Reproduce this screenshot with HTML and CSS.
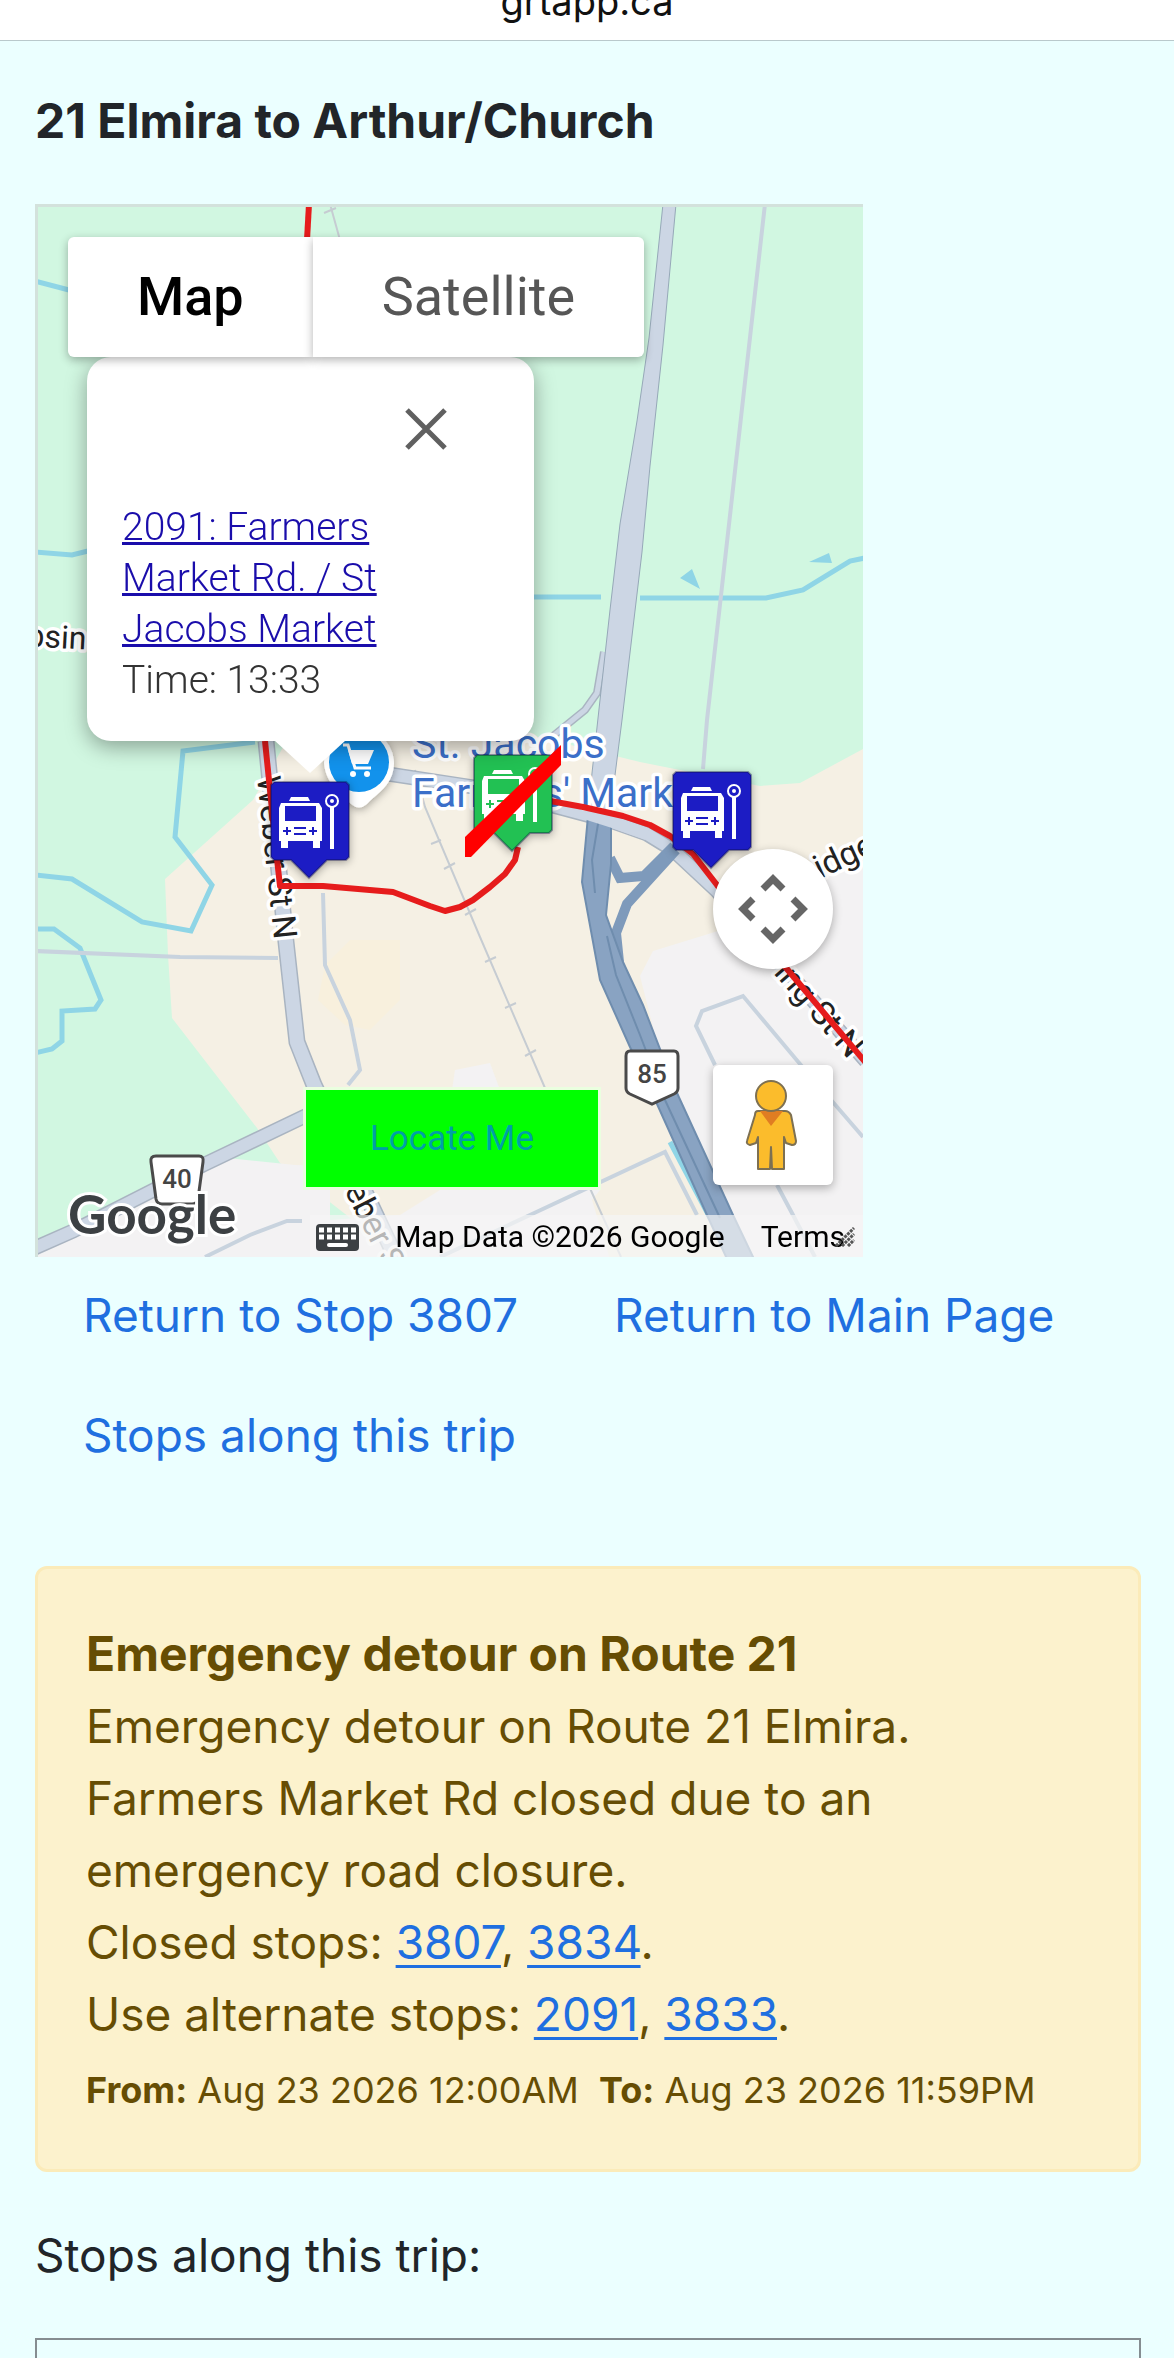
FILE: index.html
```html
<!DOCTYPE html>
<html lang="en">
  <head>
    <meta charset="utf-8">
    <meta name="viewport" content="width=device-width, initial-scale=1">
    <title>21 Elmira to Arthur/Church</title>
    <link rel="stylesheet" href="styles.css">
  </head>
  <body>
  <header class="addressbar">grtapp.ca</header>
  <main class="page">
    <h1 class="title">21 Elmira to Arthur/Church</h1>

    <div class="map">
      <svg class="tiles" viewBox="38 207 825 1050" preserveAspectRatio="xMidYMid slice">
        <defs>
          <g id="bus">
            <path class="pin" d="M3 0H75L78 3V75L75 78H56L38 96L20 78H3L0 75V3Z"/>
            <g fill="#fff">
              <path d="M20 15H37L39 19H18Z"/>
              <path d="M10 21H48L51 26V59H49V66H42V59H17V66H10V59H8V26Z"/>
              <rect x="59" y="24" width="4" height="43"/>
            </g>
            <rect x="14" y="24" width="31" height="15" fill="currentColor"/>
            <circle cx="61" cy="19" r="6" fill="none" stroke="#fff" stroke-width="2"/>
            <circle cx="61" cy="19" r="2" fill="#fff"/>
            <path class="lamps" d="M12 49H20M16 45V53M38 49H46M42 45V53M23 46H35M23 52H35"/>
          </g>
          <filter id="soft" x="-30%" y="-30%" width="160%" height="160%">
            <feDropShadow dx="0" dy="2" stdDeviation="4" flood-opacity=".35"/>
          </filter>
        </defs>

        <!-- land -->
        <rect x="35" y="204" width="830" height="1055" fill="#d1f7e1"/>
        <path fill="#f5f0e4" d="M165 879L253 800L290 735H530L640 762L760 786L800 783L863 749V1257H400L280 1163L257 1128L172 1018L168 955Z"/>
        <path fill="#f8f0dd" d="M325 965L350 940H400V1000L370 1030L345 1025L318 1000Z"/>
        <path fill="#f3f2f3" d="M35 1259V1246L190 1175L227 1158L295 1165L330 1166V1220L400 1215L440 1190H600L592 1200L610 1259Z"/>
        <path fill="#f3f2f3" d="M653 951L718 931L800 875L863 845V1259H753L733 1215L677 1093L658 1049L653 1027L640 976Z"/>
        <path fill="#f3f2f3" d="M455 1070L490 1063L500 1090H452Z"/>

        <!-- water -->
        <g class="water">
          <path d="M35 875L72 879L142 922L191 931L212 885L175 837L183 751L255 742"/>
          <path d="M35 929H54L80 948L101 1000L95 1009L62 1011V1041L52 1049L35 1053"/>
          <path d="M35 281L69 290M35 552L72 555L88 551"/>
          <path d="M533 597H601M640 598H766L803 590L850 561L865 558"/>
          <path d="M670 1142L710 1218"/>
        </g>
        <path fill="#8fd5e6" d="M680 578L692 569L700 589ZM809 562L829 553L832 563Z"/>

        <!-- local roads and railway -->
        <g class="lane">
          <path d="M765 204L707 720L703 769"/>
          <path d="M35 951L180 957L278 958"/>
          <path d="M323 893L325 965L350 1020L360 1070L348 1085"/>
          <path d="M863 1137L800 1064L743 996L702 1011L696 1026L715 1065M777 1185L793 1215L815 1257"/>
          <path d="M440 1257L530 1215L665 1152L697 1215"/>
          <path d="M205 1257L250 1235L287 1221H302"/>
        </g>
        <path class="rail" d="M330 204L340 240M415 770L425 807L480 937L545 1088L593 1195L621 1257M324 213L336 208M431 844L441 840M444 869L455 863M465 915L476 909M485 962L496 957M505 1008L516 1003M525 1056L536 1050"/>

        <!-- main roads -->
        <g class="casing">
          <path d="M266 741L286 942L297 1042L314 1085L345 1150L397 1260" stroke-width="17"/>
          <path d="M30 1250L73 1231L203 1165L320 1109" stroke-width="15"/>
          <path d="M375 772L474 787L553 806L613 822L647 834L673 850L717 891L866 1061" stroke-width="15"/>
          <path d="M604 652L597 693L585 710L553 736" stroke-width="8"/>
        </g>
        <g class="road">
          <path d="M266 741L286 942L297 1042L314 1085L345 1150L397 1260" stroke-width="14"/>
          <path d="M30 1250L73 1231L203 1165L320 1109" stroke-width="12"/>
          <path d="M375 772L474 787L553 806L613 822L647 834L673 850L717 891L866 1061" stroke-width="12"/>
          <path d="M604 652L597 693L585 710L553 736" stroke-width="5"/>
        </g>
        <path fill="#ccd6e4" stroke="#96a8b8" stroke-width="1" d="M663 204L649 338L637 421L620 524L610 610L600 700L592 773L588 816H611L613 791L622 720L642 552L650 466L663 345L676 204Z"/>
        <g class="ramp">
          <path d="M610 858L620 878L644 876L674 846"/>
          <path d="M676 850L627 904L616 933L619 962"/>
        </g>
        <path fill="#89a3c2" stroke="#6f8dae" stroke-width="2" d="M588 816L582 882L600 980L630 1047L657 1104L707 1215L727 1259H754L733 1215L677 1093L643 1005L623 962L606 915L611 864V816Z"/>
        <path fill="none" stroke="#6f8dae" stroke-width="2" d="M599 818L592 860L595 893M607 936L616 975L640 1035L665 1100L720 1218"/>
        <path class="road" d="M575 810L613 822L647 834" stroke-width="12"/>

        <!-- street names -->
        <g class="street">
          <text x="26" y="647" font-size="32" transform="rotate(3 38 647)">bsin</text>
          <text font-size="33" transform="translate(257 777) rotate(84)">Weber St N</text>
          <text font-size="33" transform="translate(344 1190) rotate(63)">eber St</text>
          <text font-size="33" transform="translate(820 879) rotate(-25)">idge</text>
          <text font-size="33" transform="translate(773 973) rotate(49)">ing St N</text>
        </g>

        <!-- shopping place -->
        <g filter="url(#soft)">
          <path fill="#fff" d="M324 763A35 35 0 1 1 392 775C387 789 374 796 367 804Q359 811 351 804C342 795 326 785 324 763Z"/>
        </g>
        <circle cx="359" cy="762" r="30" fill="#1292ec"/>
        <path fill="#fff" d="M348 750H374L368 764H352Z"/>
        <path fill="none" stroke="#fff" stroke-width="3" d="M343 745H348L355 768H371"/>
        <circle cx="353" cy="774" r="3" fill="#fff"/><circle cx="367" cy="774" r="3" fill="#fff"/>
        <g class="place">
          <text x="412" y="758">St. Jacobs</text>
          <text x="412" y="807">Farmers' Mark</text>
        </g>

        <!-- route line -->
        <g class="route">
          <path d="M309 204L307 240"/>
          <path d="M265 741L277 859L280 886H323L393 892L430 906L445 911L460 907L473 900L490 887L505 874L515 860L518 847"/>
          <path d="M545 800L583 807L623 816L650 825L670 836L693 854L717 885L787 969L866 1063"/>
        </g>

        <path class="shield" d="M156 1156H199Q204 1156 203 1162L198 1199Q197 1204 192 1204H162Q157 1204 156 1199L151 1162Q150 1156 156 1156Z"/>
        <text class="shieldno" x="177" y="1188">40</text>
        <path class="shield" d="M630 1051H674Q678 1051 678 1056V1088Q678 1092 674 1094L652 1104L630 1094Q626 1092 626 1088V1056Q626 1051 630 1051Z"/>
        <text class="shieldno" x="652" y="1083">85</text>

        <!-- stops -->
        <g filter="url(#soft)">
          <use href="#bus" x="271" y="782" class="open"/>
          <use href="#bus" x="673" y="772" class="open"/>
          <use href="#bus" x="474" y="755" class="closed"/>
        </g>
        <path fill="#f00" d="M465 837L561 745V765L471 857H465Z"/>

        <text class="google" x="68" y="1234">Google</text>
      </svg>

      <div class="infowindow">
        <button class="close" type="button" aria-label="Close">
          <svg viewBox="0 0 42 42" width="42" height="42"><path d="M2 2L40 40M40 2L2 40" stroke="#606060" stroke-width="5"/></svg>
        </button>
        <a href="#">2091: Farmers Market Rd. / St Jacobs Market</a><br>
        Time: 13:33
      </div>

      <div class="maptype">
        <button type="button" class="active">Map</button>
        <button type="button">Satellite</button>
      </div>

      <button class="pan" type="button" aria-label="Map camera controls">
        <svg viewBox="0 0 120 120" width="120" height="120"><path fill="none" stroke="#666" stroke-width="7" d="M50 40L60 30L70 40M50 80L60 90L70 80M40 50L30 60L40 70M80 50L90 60L80 70"/></svg>
      </button>

      <button class="pegman" type="button" aria-label="Street View">
        <svg viewBox="0 0 120 120" width="120" height="120">
          <path fill="#fbbc2c" stroke="#7d7052" stroke-width="2" stroke-linejoin="round" d="M45 46H72Q76 46 78 50L83 76Q83 80 79 80L73 78L71 72V104H59L58 82L57 104H45V72L43 78L37 80Q33 79 34 76L42 50Q42 46 45 46Z"/>
          <path fill="#e07d22" d="M47 46H70L58 61Z"/>
          <circle cx="58" cy="31" r="15" fill="#fbbc2c" stroke="#7d7052" stroke-width="2"/>
        </svg>
      </button>

      <button class="locate" type="button">Locate Me</button>

      <div class="credits">
        <button type="button" class="keys" aria-label="Keyboard shortcuts">
          <svg viewBox="0 0 43 27" width="43" height="27">
            <rect width="43" height="27" rx="4" fill="#3c4043"/>
            <path stroke="#fff" stroke-width="5" stroke-dasharray="5 3" d="M3 6H41M3 13H41"/>
            <path stroke="#fff" stroke-width="4" stroke-linecap="round" d="M13 21H30"/>
          </svg>
        </button>
        <span>Map Data ©2026 Google</span>
        <a href="#">Terms</a>
        <svg class="grip" viewBox="0 0 20 20" width="20" height="20"><path stroke="#555" stroke-width="3" stroke-dasharray="3 1" d="M1 19L19 1M7 19L19 7M13 19L19 13"/></svg>
      </div>
    </div>

    <nav class="links">
      <a href="#">Return to Stop 3807</a>
      <a href="#">Return to Main Page</a>
      <a href="#stops">Stops along this trip</a>
    </nav>

    <div class="alert">
      <b class="subject">Emergency detour on Route 21</b><br>
      Emergency detour on Route 21 Elmira.<br>
      Farmers Market Rd closed due to an<br>
      emergency road closure.<br>
      Closed stops: <a href="#">3807</a>, <a href="#">3834</a>.<br>
      Use alternate stops: <a href="#">2091</a>, <a href="#">3833</a>.<br>
      <span class="dates"><b>From:</b> Aug 23 2026 12:00AM&nbsp; <b>To:</b> Aug 23 2026 11:59PM</span>
    </div>

    <p class="stops" id="stops">Stops along this trip:</p>
    <div class="stoplist"></div>
  </main>
  </body>
</html>
```
FILE: styles.css
```css
* { box-sizing: border-box; }
body { margin: 0; background: #ebffff; color: #212529; font-family: Inter, "Liberation Sans", sans-serif; font-size: 46px; line-height: 72px; }
a { color: #1f6fe0; }
button { font-family: Roboto, "Liberation Sans", sans-serif; border: 0; padding: 0; margin: 0; background: #fff; cursor: pointer; }
svg { display: block; }

.addressbar { height: 41px; overflow: hidden; background: #fff; color: #111; border-bottom: 1px solid #b9c9cc; font-size: 38px; line-height: 48px; display: flex; align-items: flex-end; justify-content: center; padding-bottom: 15px; }
.page { padding: 0 33px 0 35px; overflow: hidden; height: calc(100vh - 41px); }
.title { margin: 44px 0 47px; font-size: 48px; line-height: 72px; font-weight: 700; }

/* map */
.map { position: relative; overflow: hidden; width: 100%; max-width: 828px; height: 1053px; border: solid #d3e2dc; border-width: 3px 0 0 3px; font-family: Roboto, "Liberation Sans", sans-serif; }
.tiles { width: 100%; height: 100%; }
.tiles text { font-family: Roboto, "Liberation Sans", sans-serif; }
.water { fill: none; stroke: #8fd5e6; stroke-width: 5; }
.lane { fill: none; stroke: #c8d3de; stroke-width: 4; }
.rail { fill: none; stroke: #c6ccd2; stroke-width: 2; }
.casing { fill: none; stroke: #a9b4c1; }
.road { fill: none; stroke: #ccd6e4; }
.ramp { fill: none; stroke: #7e9abb; stroke-width: 10; }
.route { fill: none; stroke: #e61c1c; stroke-width: 6; stroke-linejoin: round; }
.street text { fill: #222; stroke: #fff; stroke-width: 7; stroke-linejoin: round; paint-order: stroke; }
.place text { font-size: 41px; fill: #3b6fc9; stroke: #fff; stroke-width: 7; stroke-linejoin: round; paint-order: stroke; }
.shield { fill: #fff; stroke: #4a4a4a; stroke-width: 3; }
.shieldno { font-size: 26px; font-weight: 500; fill: #444; text-anchor: middle; }
.tiles .google { font-family: Lato, sans-serif; font-size: 53px; font-weight: 700; fill: #3c4043; stroke: #fff; stroke-width: 6; paint-order: stroke; }
.pin { fill: currentColor; stroke: rgba(0, 0, 60, .35); stroke-width: 2; }
.lamps { fill: none; stroke: currentColor; stroke-width: 2; }
.open { color: #1c1cc4; }
.closed { color: #22c152; }

.maptype { position: absolute; left: 30px; top: 30px; display: flex; }
.maptype button { height: 120px; padding: 0 69px 2px; font-size: 54px; color: #565656; border-radius: 0 6px 6px 0; box-shadow: 0 3px 10px rgba(0, 0, 0, .3); }
.maptype .active { color: #000; font-weight: 500; border-radius: 6px 0 0 6px; }

.infowindow { position: absolute; left: 49px; top: 150px; width: 447px; height: 384px; padding: 145px 120px 0 35px; background: #fff; border-radius: 24px; box-shadow: 0 6px 21px rgba(0, 0, 0, .35); font-size: 39px; font-weight: 300; line-height: 51px; color: #333; }
.infowindow:after { content: ""; position: absolute; left: 187px; top: 383px; border: solid transparent; border-width: 33px 36px 0; border-top-color: #fff; }
.infowindow a { color: #1a0dab; text-decoration-thickness: 3px; }
.close { position: absolute; right: 87px; top: 51px; }

.pan, .pegman { position: absolute; right: 30px; width: 120px; height: 120px; box-shadow: 0 3px 10px rgba(0, 0, 0, .3); }
.pan { bottom: 288px; border-radius: 50%; }
.pegman { bottom: 72px; border-radius: 6px; }
.locate { position: absolute; left: 265px; bottom: 67px; width: 298px; height: 103px; background: #0f0; border: 3px solid #eaffdf; color: #009fa6; font-size: 35px; }

.credits { position: absolute; right: 0; bottom: 0; height: 42px; display: flex; align-items: center; background: rgba(245, 245, 245, .7); font-size: 30px; line-height: 42px; color: #000; padding: 2px 8px 0 0; }
.credits span { margin: 0 36px; }
.credits a { color: #000; text-decoration: none; }
.keys { margin-left: 6px; background: none; }
.grip { margin-left: -10px; }

.links { display: flex; flex-wrap: wrap; margin-bottom: 69px; }
.links a { padding: 22px 48px 26px; text-decoration: none; }

.alert { background: #fcf2cd; border: 3px solid #fbebb9; border-radius: 12px; padding: 49px 48px 43px; color: #664d03; }
.alert a { text-decoration-thickness: 3px; text-underline-offset: 6px; }
.subject { font-size: 48px; line-height: 70px; }
.dates { font-size: 36px; }

.stops { margin: 47px 0; }
.stoplist { height: 90px; border: 2px solid #858d91; }
```
